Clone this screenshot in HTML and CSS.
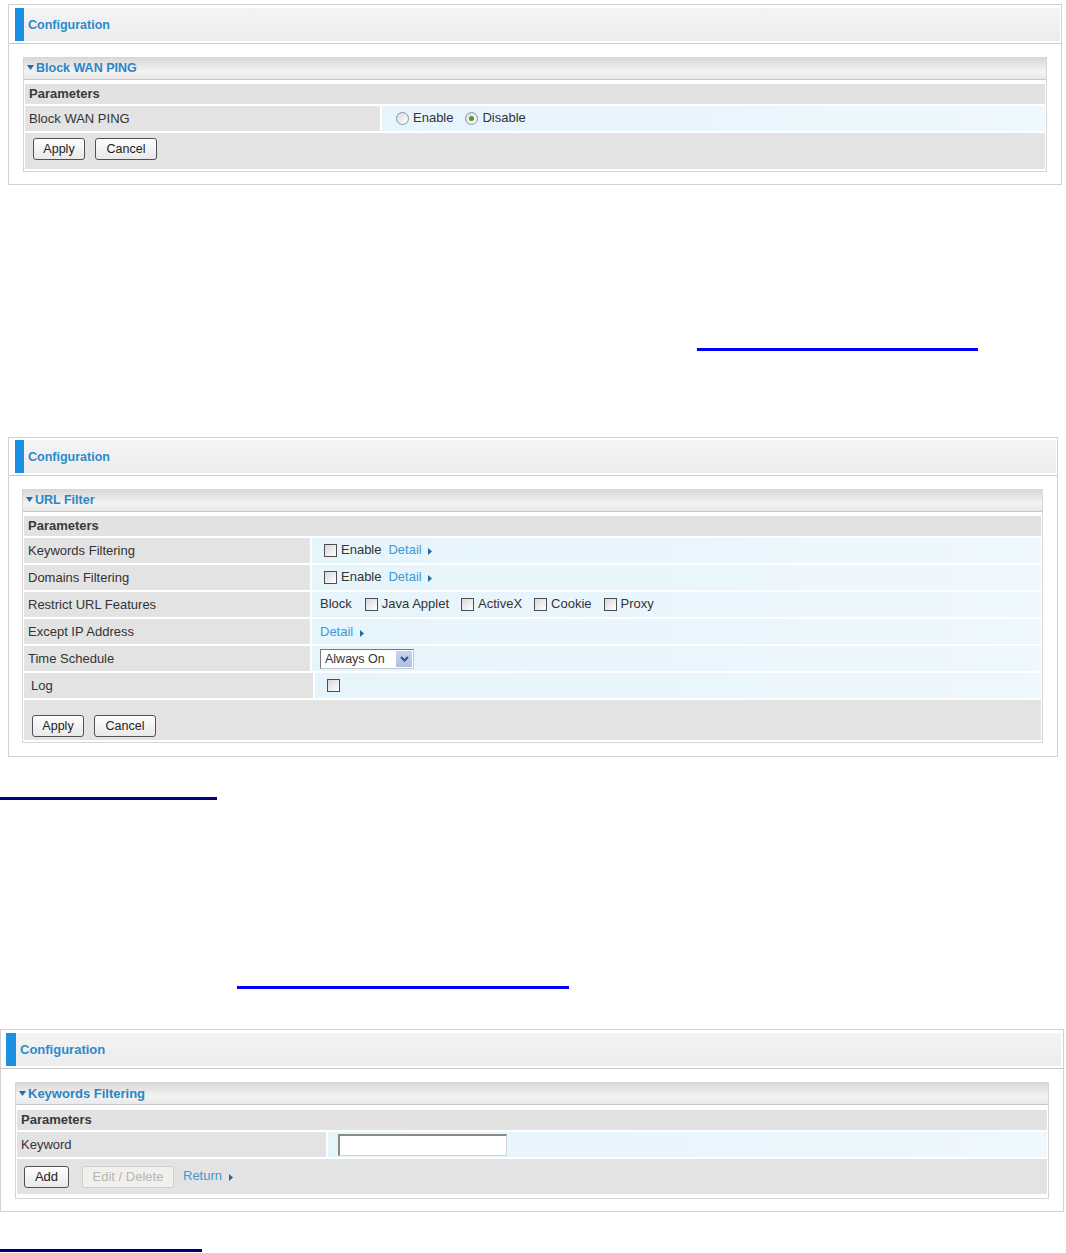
FILE: index.html
```html
<!DOCTYPE html>
<html lang="en">
<head>
    <meta charset="UTF-8">
    <meta name="viewport" content="width=device-width, initial-scale=1.0">
    <title>Block WAN PING / URL Filter</title>
    <link rel="stylesheet" href="styles.css">
</head>
<body>
    <!-- Block WAN PING -->
    <div class="panel panel-ping">
        <div class="panel-head">
            <div class="panel-title">Configuration</div>
        </div>
        <div class="panel-body">
            <div class="section">
                <div class="section-head">
                    <svg class="caret" width="7" height="5" viewBox="0 0 7 5"><path d="M0 0H7L3.5 5Z"/></svg>Block WAN PING
                </div>
                <div class="section-rows">
                    <div class="row-params">Parameters</div>
                    <div class="row">
                        <div class="label">Block WAN PING</div>
                        <div class="value">
                            <span class="radio"></span><span class="opt">Enable</span>
                            <span class="radio checked"></span><span class="opt">Disable</span>
                        </div>
                    </div>
                    <div class="row-buttons">
                        <button class="btn btn-apply">Apply</button>
                        <button class="btn btn-cancel">Cancel</button>
                    </div>
                </div>
            </div>
        </div>
    </div>

    <div class="rule rule-1"></div>

    <!-- URL Filter -->
    <div class="panel panel-url">
        <div class="panel-head">
            <div class="panel-title">Configuration</div>
        </div>
        <div class="panel-body">
            <div class="section">
                <div class="section-head">
                    <svg class="caret" width="7" height="5" viewBox="0 0 7 5"><path d="M0 0H7L3.5 5Z"/></svg>URL Filter
                </div>
                <div class="section-rows">
                    <div class="row-params">Parameters</div>
                    <div class="row">
                        <div class="label">Keywords Filtering</div>
                        <div class="value">
                            <span class="check"></span><span class="opt">Enable</span>
                            <a class="detail">Detail <svg class="arrow" width="4" height="7" viewBox="0 0 4 7"><path d="M0 0L4 3.5L0 7Z"/></svg></a>
                        </div>
                    </div>
                    <div class="row">
                        <div class="label">Domains Filtering</div>
                        <div class="value">
                            <span class="check"></span><span class="opt">Enable</span>
                            <a class="detail">Detail <svg class="arrow" width="4" height="7" viewBox="0 0 4 7"><path d="M0 0L4 3.5L0 7Z"/></svg></a>
                        </div>
                    </div>
                    <div class="row">
                        <div class="label">Restrict URL Features</div>
                        <div class="value value-plain">
                            <span class="word">Block</span>
                            <span class="check"></span><span class="opt">Java Applet</span>
                            <span class="check"></span><span class="opt">ActiveX</span>
                            <span class="check"></span><span class="opt">Cookie</span>
                            <span class="check"></span><span class="opt">Proxy</span>
                        </div>
                    </div>
                    <div class="row">
                        <div class="label">Except IP Address</div>
                        <div class="value value-plain">
                            <a class="detail">Detail <svg class="arrow" width="4" height="7" viewBox="0 0 4 7"><path d="M0 0L4 3.5L0 7Z"/></svg></a>
                        </div>
                    </div>
                    <div class="row">
                        <div class="label">Time Schedule</div>
                        <div class="value value-plain">
                            <div class="select">
                                <span>Always On</span>
                                <span class="select-btn"><svg width="9" height="6" viewBox="0 0 9 6"><path d="M1 1L4.5 4.5L8 1" fill="none" stroke="#2f4f8f" stroke-width="2"/></svg></span>
                            </div>
                        </div>
                    </div>
                    <div class="row">
                        <div class="label label-log">Log</div>
                        <div class="value">
                            <span class="check"></span>
                        </div>
                    </div>
                    <div class="row-buttons row-buttons-tall">
                        <button class="btn btn-apply">Apply</button>
                        <button class="btn btn-cancel">Cancel</button>
                    </div>
                </div>
            </div>
        </div>
    </div>

    <div class="rule rule-2"></div>
    <div class="rule rule-3"></div>

    <!-- Keywords Filtering -->
    <div class="panel panel-keyword">
        <div class="panel-head">
            <div class="panel-title">Configuration</div>
        </div>
        <div class="panel-body">
            <div class="section">
                <div class="section-head">
                    <svg class="caret" width="7" height="5" viewBox="0 0 7 5"><path d="M0 0H7L3.5 5Z"/></svg>Keywords Filtering
                </div>
                <div class="section-rows">
                    <div class="row-params">Parameters</div>
                    <div class="row">
                        <div class="label">Keyword</div>
                        <div class="value">
                            <div class="text-input"></div>
                        </div>
                    </div>
                    <div class="row-buttons">
                        <button class="btn btn-add">Add</button>
                        <button class="btn btn-disabled">Edit / Delete</button>
                        <a class="detail">Return <svg class="arrow" width="4" height="7" viewBox="0 0 4 7"><path d="M0 0L4 3.5L0 7Z"/></svg></a>
                    </div>
                </div>
            </div>
        </div>
    </div>

    <div class="rule rule-4"></div>
</body>
</html>
```

FILE: styles.css
```css
body {
    margin: 0;
    width: 1066px;
    background-color: #fff;
    font-family: "Liberation Sans", Arial, sans-serif;
    font-size: 13px;
    color: #333;
}

/* outer screenshot frame */
.panel {
    box-sizing: border-box;
    border: 1px solid #d2d2d2;
    background-color: #fff;
}
.panel-head {
    padding: 3px 1px 2px 6px;
    border-bottom: 1px solid #c9c9c9;
}
.panel-title {
    height: 33px;
    line-height: 34px;
    border-left: 9px solid #1b8fe2;
    padding-left: 4px;
    background: linear-gradient(#f4f4f4, #ececec);
    color: #2b8bcb;
    font-size: 12.5px;
    font-weight: bold;
}
.panel-body {
    padding: 13px 14px 12px 14px;
}

.section {
    border: 1px solid #d6d6d6;
}
.section-head {
    height: 21px;
    line-height: 21px;
    padding-left: 3px;
    border-bottom: 1px solid #c6c6c6;
    background: linear-gradient(#d9d9d9, #f3f3f3 65%, #e9e9e9);
    color: #2a86c6;
    font-size: 12.5px;
    font-weight: bold;
}
.caret {
    fill: #1d6fa5;
    margin-right: 2px;
    vertical-align: 2px;
}
.section-rows {
    display: flex;
    flex-direction: column;
    gap: 2px;
    padding: 4px 1px 2px 1px;
}
.row-params {
    height: 20px;
    line-height: 20px;
    padding-left: 4px;
    background-color: #e2e2e2;
    font-weight: bold;
    color: #3a3a3a;
}
.row {
    display: flex;
    gap: 2px;
    height: 25px;
}
.label {
    flex: none;
    padding-left: 4px;
    background-color: #e3e3e3;
    line-height: 25px;
}
.label-log {
    padding-left: 7px;
}
.value {
    flex: 1;
    display: flex;
    align-items: center;
    padding-left: 12px;
    background: linear-gradient(90deg, #e6f4fc, #eef8fe);
}
.value-plain {
    padding-left: 8px;
}
.row-buttons {
    display: flex;
    align-items: flex-start;
    gap: 10px;
    height: 36px;
    box-sizing: border-box;
    padding: 5px 0 0 8px;
    background-color: #e3e3e3;
}
.row-buttons-tall {
    height: 40px;
    padding-top: 15px;
}

/* controls */
.radio {
    box-sizing: border-box;
    width: 13px;
    height: 13px;
    border: 1px solid #8795a1;
    border-radius: 50%;
    background: linear-gradient(135deg, #dcdcdc, #fff);
    position: relative;
    margin-right: 4px;
}
.radio.checked::after {
    content: "";
    position: absolute;
    left: 3px;
    top: 3px;
    width: 5px;
    height: 5px;
    border-radius: 50%;
    background-color: #3f9e3a;
}
.opt {
    margin-right: 16px;
    line-height: 1;
    position: relative;
    top: -1px;
}
.check {
    box-sizing: border-box;
    width: 13px;
    height: 13px;
    border: 1px solid #4d4d4d;
    background: linear-gradient(135deg, #d8d8d8, #fff);
    margin-right: 4px;
}
.value .opt {
    margin-right: 12px;
}
.value-plain .word {
    margin-right: 13px;
    position: relative;
    top: -1px;
}
.detail {
    color: #3e9ad2;
    text-decoration: none;
    position: relative;
    top: -1px;
    margin-left: -5px;
}
.value-plain .detail {
    margin-left: 0;
    top: 0;
}
.arrow {
    fill: #1a6da0;
    margin-left: 3px;
    vertical-align: -1px;
}
.select {
    display: flex;
    align-items: center;
    justify-content: space-between;
    box-sizing: border-box;
    width: 94px;
    height: 20px;
    padding: 0 1px 0 4px;
    border: 1px solid #c8c8c8;
    border-top-color: #7a7a7a;
    border-left-color: #7a7a7a;
    background-color: #fff;
    font-size: 12.5px;
}
.select-btn {
    display: flex;
    align-items: center;
    justify-content: center;
    width: 16px;
    height: 16px;
    background: linear-gradient(#c8d4ee, #aebfe4);
}
.text-input {
    box-sizing: border-box;
    width: 169px;
    height: 22px;
    border: 1px solid #d2d2d2;
    border-top: 2px solid #8a8a8a;
    border-left: 2px solid #8a8a8a;
    background-color: #fff;
}

.btn {
    box-sizing: border-box;
    height: 22px;
    padding: 0;
    border: 1px solid #4f5255;
    border-radius: 3px;
    background: linear-gradient(#fdfdfd, #e9e9e9);
    font-family: "Liberation Sans", Arial, sans-serif;
    font-size: 12.5px;
    color: #222;
}
.btn-apply { width: 52px; }
.btn-cancel { width: 62px; }

/* block wan ping shot */
.panel-ping {
    margin: 4px 0 0 8px;
    width: 1054px;
}
.panel-ping .label { width: 351px; }
.panel-ping .value { padding-left: 14px; }

/* url filter shot */
.panel-url {
    margin: 86px 0 0 8px;
    width: 1050px;
}
.panel-url .panel-head { padding-top: 2px; }
.panel-url .panel-body { padding: 13px 14px 13px 13px; }
.panel-url .label { width: 282px; }

/* keyword shot is a bit larger */
.panel-keyword {
    margin: 40px 0 0 0;
    width: 1064px;
    font-size: 13px;
}
.panel-keyword .panel-head { padding: 3px 2px 2px 5px; }
.panel-keyword .panel-title { border-left-width: 10px; font-size: 13px; }
.panel-keyword .section-head { font-size: 13px; }
.panel-keyword .section-rows { padding-top: 5px; padding-bottom: 4px; }
.panel-keyword .label { width: 305px; }
.panel-keyword .value { padding-left: 10px; }
.panel-keyword .row-buttons {
    height: 35px;
    gap: 13px;
    padding: 0 0 0 7px;
    align-items: center;
}
.panel-keyword .btn { height: 22px; font-size: 13px; }
.btn-add { width: 45px; }
.btn-disabled {
    width: 92px;
    border-color: #cfcfcf;
    background: #f1f0ec;
    color: #b5b5b5;
}
.panel-keyword .row-buttons .detail {
    margin-left: -4px;
    top: -1px;
}

/* link underlines left in the document */
.rule {
    height: 3px;
}
.rule-1 {
    margin: 163px 0 0 697px;
    width: 281px;
    background-color: #0000ff;
}
.rule-2 {
    margin: 40px 0 0 0;
    width: 217px;
    background-color: #000080;
}
.rule-3 {
    margin: 186px 0 0 237px;
    width: 332px;
    background-color: #0000ff;
}
.rule-4 {
    margin: 37px 0 0 0;
    width: 202px;
    background-color: #000080;
}
```
